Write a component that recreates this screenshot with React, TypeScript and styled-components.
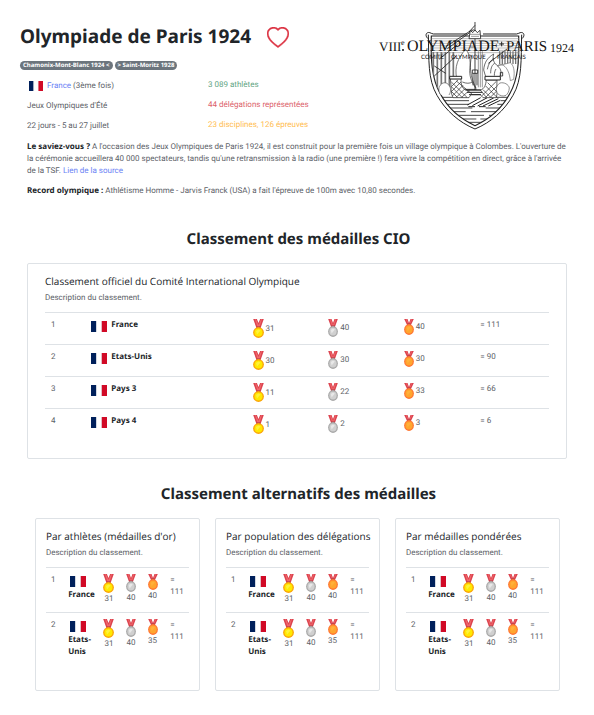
import React from "react";
import styled, { createGlobalStyle } from "styled-components";

const headingFont = `"Segoe UI", "Noto Sans", sans-serif`;

const GlobalStyle = createGlobalStyle`
  *, *::before, *::after { box-sizing: border-box; }
  body {
    margin: 0;
    background: #fff;
    color: #5c6167;
    font-family: "Segoe UI", Roboto, "Noto Sans", sans-serif;
    font-size: 8px;
    line-height: 12px;
    text-rendering: geometricPrecision;
  }
  h1, h2, h3, p { margin: 0; }
`;

const Page = styled.main`
  padding: 20px 17px 25px 20px;
`;

const Header = styled.header`
  display: grid;
  grid-template-columns: 1fr 200px;
`;

const TitleRow = styled.div`
  display: flex;
  align-items: center;
  gap: 16px;
  height: 32px;
`;

const Title = styled.h1`
  color: #212529;
  font-family: ${headingFont};
  font-size: 19px;
  line-height: 24px;
  font-weight: 700;
  white-space: nowrap;
`;

const HeartButton = styled.button`
  display: flex;
  padding: 4px 0 0;
  border: 0;
  background: none;
  color: #dc3545;
  cursor: pointer;
`;

const Badges = styled.nav`
  display: flex;
  gap: 2px;
  margin-top: 9px;
`;

const Badge = styled.a`
  padding: 0 3px;
  border-radius: 5px;
  background: #6c757d;
  color: #fff;
  font-family: ${headingFont};
  font-size: 6px;
  line-height: 9px;
  font-weight: 700;
  text-decoration: none;
  white-space: nowrap;
`;

const Facts = styled.div`
  display: grid;
  grid-template-columns: 181px 1fr;
  margin: 9px 0 0 7px;
`;

const FactList = styled.div`
  display: flex;
  flex-direction: column;
  gap: 8px;
`;

const Fact = styled.p<{ $tone?: string }>`
  display: flex;
  align-items: center;
  gap: 4px;
  color: ${(p) => p.$tone ?? "inherit"};
`;

const HostFact = styled(Fact)`
  min-height: 13px;
  padding-left: 2px;
`;

const Link = styled.a`
  color: #6b83f5;
  text-decoration: none;
`;

const Story = styled.div`
  display: flex;
  flex-direction: column;
  gap: 8px;
  margin: 9px 0 32px 7px;
`;

const StoryText = styled.p`
  margin-right: 10px;
`;

const Strong = styled.strong`
  color: #212529;
  font-family: ${headingFont};
  font-weight: 700;
  line-height: 12px;
`;

const SectionTitle = styled.h2`
  margin-bottom: 14px;
  color: #212529;
  font-family: ${headingFont};
  font-size: 15px;
  line-height: 20px;
  font-weight: 700;
  text-align: center;
`;

const Card = styled.section<{ $wide?: boolean }>`
  min-width: 0;
  padding: ${(p) => (p.$wide ? "10px 17px 17px" : "10px 10px 32px")};
  margin: ${(p) => (p.$wide ? "0 10px 25px 7px" : "0")};
  border: 1px solid #dee2e6;
  border-radius: 2px;
`;

const CardTitle = styled.h3`
  color: #212529;
  font-family: "Segoe UI", "Open Sans", sans-serif;
  font-size: 10px;
  line-height: 14px;
  font-weight: 400;
  white-space: nowrap;
`;

const CardText = styled.p`
  margin: 4px 0 8px;
`;

const Cards = styled.div`
  display: grid;
  grid-template-columns: repeat(3, 1fr);
  gap: 15px;
  margin: 0 17px 0 15px;
`;

const Table = styled.table`
  width: 100%;
  border-collapse: collapse;
  table-layout: fixed;
`;

const Row = styled.tr<{ $compact?: boolean }>`
  height: ${(p) => (p.$compact ? 45 : 32)}px;
  border-top: 1px solid #dee2e6;
`;

const Cell = styled.td<{ $compact?: boolean }>`
  padding: ${(p) => (p.$compact ? "6px 0 0 5px" : "6px 0 6px 6px")};
  vertical-align: top;
`;

const CompactMedalCell = styled(Cell)`
  padding: 6px 0 0;
`;

const TotalCell = styled(Cell)`
  padding-left: 7px;
`;

const Country = styled.div<{ $compact?: boolean }>`
  display: flex;
  flex-direction: ${(p) => (p.$compact ? "column" : "row")};
  gap: ${(p) => (p.$compact ? 2 : 4)}px;
  padding-top: ${(p) => (p.$compact ? 2 : 0)}px;

  svg {
    flex: none;
    margin: ${(p) => (p.$compact ? "0 0 0 2px" : "2px 0 0")};
  }
`;

const MedalCount = styled.div<{ $compact?: boolean }>`
  display: flex;
  flex-direction: ${(p) => (p.$compact ? "column" : "row")};
  align-items: center;
  gap: ${(p) => (p.$compact ? 0 : 2)}px;

  svg { flex: none; }
`;

const Flag = ({ width = 16 }: { width?: number }) => (
  <svg width={width} height={width === 16 ? 11 : 10} viewBox="0 0 16 11" preserveAspectRatio="none" aria-hidden="true">
    <path fill="#fff" d="M0 0h16v11H0z" />
    <path fill="#00205b" d="M0 0h5.2v11H0z" />
    <path fill="#d8dce3" d="M5.2 0h.6v11h-.6zM10.2 0h.6v11h-.6z" />
    <path fill="#d10a26" d="M10.8 0H16v11h-5.2z" />
  </svg>
);

type MedalKind = "gold" | "silver" | "bronze";

const medals: Record<MedalKind, { h: number; w: number; rim: string; face: string; shine: string; label: string }> = {
  gold: { h: 19, w: 11, rim: "#fba50a", face: "#ffe900", shine: "#fff23c", label: "Or" },
  silver: { h: 18, w: 10, rim: "#a9a9a9", face: "#d0d0d0", shine: "#e8e8e8", label: "Argent" },
  bronze: { h: 16, w: 10, rim: "#ff7733", face: "#ffa52e", shine: "#ffb13c", label: "Bronze" },
};

const Medal = ({ kind }: { kind: MedalKind }) => {
  const m = medals[kind];
  const cy = m.h - 5.5;
  return (
    <svg width={m.w} height={m.h} viewBox={`0 0 11 ${m.h}`} preserveAspectRatio="none" role="img" aria-label={m.label}>
      <path fill="#dc4450" d={`M.2 0h3.7l1.6 4L7.1 0h3.7L7.4 ${cy - 4}H3.6z`} />
      <path fill="#f0696c" d={`M2 0h.8l2.7 6L8.2 0H9L6.4 ${cy - 5}H4.6z`} />
      <path fill="#a53a43" d={`M3.6 ${cy - 6}h3.8v1.2H3.6z`} />
      <circle cx="5.5" cy={cy} r="5.4" fill={m.rim} />
      <circle cx="5.5" cy={cy} r="4" fill={m.face} />
      <path fill={m.shine} d={`M3 ${cy - 1.5}l2.5-1.5 2 1-3.5 4z`} />
    </svg>
  );
};

const Heart = () => (
  <svg width="22" height="22" viewBox="0 0 16 16" fill="currentColor" stroke="currentColor" strokeWidth=".3" aria-hidden="true">
    <path d="m8 2.748-.717-.737C5.6.281 2.514.878 1.4 3.053c-.523 1.023-.641 2.5.314 4.385.92 1.815 2.834 3.989 6.286 6.357 3.452-2.368 5.365-4.542 6.286-6.357.955-1.886.838-3.362.314-4.385C13.486.878 10.4.28 8.717 2.01zM8 15C-7.333 4.868 3.279-3.04 7.824 1.143q.09.083.176.171a3 3 0 0 1 .176-.17C12.72-3.042 23.333 4.867 8 15" />
  </svg>
);

const Crest = styled.svg`
  display: block;
  width: 100%;
  height: auto;
  align-self: start;
  overflow: visible;
`;

const Lettering = styled.text<{ $size: number }>`
  fill: #141414;
  font-family: "Liberation Serif", serif;
  font-size: ${(p) => p.$size}px;
`;

const Caption = styled.text`
  fill: #141414;
  font-family: Lato, sans-serif;
  font-size: 6px;
`;

const range = (from: number, to: number, step: number) =>
  Array.from({ length: Math.floor((to - from) / step) + 1 }, (_, i) => from + i * step);

const verticals = (x1: number, x2: number, y1: number, y2: number, step: number) =>
  range(x1, x2, step).map((x) => `M${x} ${y1}V${y2}`).join("");

const horizontals = (y1: number, y2: number, x1: number, x2: number, step: number) =>
  range(y1, y2, step).map((y) => `M${x1} ${y}H${x2}`).join("");

const inner = "M187 78H449C451 150 448 205 423 250C398 297 360 328 318 347C276 328 238 297 213 250C188 205 185 150 187 78Z";
const outer = "M178 74C180 150 176 208 204 256C230 302 270 337 318 357C366 337 406 302 432 256C460 208 456 150 458 74";

const ParisCrest = () => (
  <Crest viewBox="0 -1 200 110" role="img" aria-label="VIIIe Olympiade Paris 1924, Comité Olympique Français">
    <g transform="translate(-8 -11) scale(.33333)" fill="none" stroke="#222" strokeWidth="2">
      <clipPath id="shield"><path d={inner} /></clipPath>
      <path d={outer} fill="#fff" strokeWidth="3" />
      <path d={inner} strokeWidth="3.5" />
      <path d="M180 88c-16-10-8-27 7-18l6 2H295M456 88c16-10 8-27-7-18l-6 2H342" strokeWidth="3" />
      <g clipPath="url(#shield)">
        <path d={horizontals(86, 128, 188, 450, 7)} stroke="#999" strokeWidth="2" />
        <path d={verticals(193, 262, 126, 236, 12)} stroke="#777" strokeWidth="5" />
        <path d={verticals(392, 448, 124, 162, 8)} stroke="#777" strokeWidth="4" />
        <path d={verticals(328, 340, 124, 232, 6)} stroke="#666" />
        <path d="M192 262H300M350 262H446M198 272H300M395 272H440M205 283H300M385 283H430M214 294H310M350 294H420M225 305H290M306 305H414M236 316H345M360 316H400M254 327H322M334 327H382M280 337H356" strokeWidth="2.5" />
        <path d="M295 285l40-22M310 287l45-24M326 288l48-24M342 288l46-22M358 288l36-17M298 290h20M330 290h20" strokeWidth="3" />
      </g>
      <path d="M263 205C256 170 266 145 290 118C306 136 304 160 302 182C302 205 310 218 322 238H282C272 230 266 220 263 205Z" fill="#fff" stroke="#333" />
      <path d="M308 136c-7 30-5 65 13 98M280 216c12 5 22 5 30 0" />
      <path d="M344 180c2-22 10-36 30-48-5 18 2 28 12 36 12 10 12 22 6 32h-42z" fill="#fff" />
      <path d="M355 178c3-16 10-27 20-34M365 190c0-18 5-26 12-30M376 197c0-9 2-16 5-20" />
      <path d="M384 168C398 156 420 170 424 212L434 208C438 182 434 166 424 158z" fill="#fff" stroke="#666" />
      <path d="M244 206C248 230 244 250 252 263H300L306 254H334L342 263H382C387 247 382 230 384 210H352C350 226 346 237 334 240H290C278 234 276 222 276 206Z" fill="#fff" />
      <path d="M247 216l47 46M247 230l33 33M247 244l18 18M262 213l48 40M278 262l24-22M262 262l26-26M250 258l32-32M248 244l28-28M247 230l20-20M338 258l44-44M350 262l33-33M364 262l20-20M350 228l34 34M342 239l24 24M356 218l28 28M334 240l18 22" strokeWidth="2" />
      <path d="M290 240h46M294 247h46M300 254h36" strokeWidth="3" />
      <path d="M242 199h36v8h-36zM348 199h46v11h-46z" fill="#fff" strokeWidth="3" />
      <path d="M394 187h7v11h-7zM310 180h16v10h-16zM312 190v36M324 190v36" strokeWidth="2.5" />
      <path d="M215 254c-8-11-7-25 2-31 4-7 18-6 22 2 8 9 7 21 1 30M386 251c-7-11-4-26 7-32 12-3 26 4 28 15-1 11-5 18-10 22-9 4-17 2-25-5Z" fill="#fff" stroke="#555" />
      <path d="M318 36V240M230 110L310 59M235 116L316 58M196 168L230 190M196 198L262 137M358 160L414 117M265 104L210 148M300 66L318 46" strokeWidth="2.5" />
      <path d="M300 86l4-25 7 7 7-8 7 8 8-7 2 25z" fill="#fff" strokeWidth="2.5" />
      <path d="M303 73h30M306 79h24" stroke="#666" />
      <path d="M398 95v14M391 102h14" strokeWidth="3" />
    </g>
    <Lettering $size={13} x="2" y="30">VIII</Lettering>
    <Lettering $size={8} x="24" y="24">e</Lettering>
    <circle cx="26" cy="29" r="1" fill="#141414" />
    <Lettering $size={16} x="30" y="30">OLYMPIADE</Lettering>
    <Lettering $size={15} x="129" y="30">PARIS</Lettering>
    <Lettering $size={12} x="173" y="31">1924</Lettering>
    <Caption x="44" y="38">COMITÉ</Caption>
    <Caption x="74" y="38">OLYMPIQUE</Caption>
    <Caption x="120" y="38">FRANÇAIS</Caption>
  </Crest>
);

type Entry = { rank: number; country: string; gold: number; silver: number; bronze: number; total: number };

const official: Entry[] = [
  { rank: 1, country: "France", gold: 31, silver: 40, bronze: 40, total: 111 },
  { rank: 2, country: "Etats-Unis", gold: 30, silver: 30, bronze: 30, total: 90 },
  { rank: 3, country: "Pays 3", gold: 11, silver: 22, bronze: 33, total: 66 },
  { rank: 4, country: "Pays 4", gold: 1, silver: 2, bronze: 3, total: 6 },
];

const alternative: Entry[] = [
  { rank: 1, country: "France", gold: 31, silver: 40, bronze: 40, total: 111 },
  { rank: 2, country: "Etats-Unis", gold: 31, silver: 40, bronze: 35, total: 111 },
];

const Col = styled.col<{ $share: number }>`
  width: ${(p) => p.$share}%;
`;

const wideColumns = [8, 32, 15, 15, 15, 15];
const compactColumns = [12, 24, 16, 15, 15, 18];

const Ranking = ({ title, rows, compact }: { title: string; rows: Entry[]; compact?: boolean }) => {
  const MedalCell = compact ? CompactMedalCell : Cell;
  return (
    <Card $wide={!compact}>
      <CardTitle>{title}</CardTitle>
      <CardText>Description du classement.</CardText>
      <Table aria-label={title}>
        <colgroup>
          {(compact ? compactColumns : wideColumns).map((share, i) => (
            <Col key={i} $share={share} />
          ))}
        </colgroup>
        <tbody>
          {rows.map((r) => (
            <Row key={r.rank} $compact={compact}>
              <Cell $compact={compact}>{r.rank}</Cell>
              <Cell $compact={compact}>
                <Country $compact={compact}>
                  <Flag />
                  <Strong>{r.country}</Strong>
                </Country>
              </Cell>
              {(["gold", "silver", "bronze"] as MedalKind[]).map((kind) => (
                <MedalCell key={kind}>
                  <MedalCount $compact={compact}>
                    <Medal kind={kind} />
                    {r[kind]}
                  </MedalCount>
                </MedalCell>
              ))}
              <TotalCell $compact={compact}>= {r.total}</TotalCell>
            </Row>
          ))}
        </tbody>
      </Table>
    </Card>
  );
};

export default function App() {
  return (
    <>
      <GlobalStyle />
      <Page>
        <Header>
          <div>
            <TitleRow>
              <Title>Olympiade de Paris 1924</Title>
              <HeartButton type="button" aria-label="Ajouter aux favoris">
                <Heart />
              </HeartButton>
            </TitleRow>
            <Badges>
              <Badge href="#chamonix">Chamonix-Mont-Blanc 1924 &lt;</Badge>
              <Badge href="#saint-moritz">&gt; Saint-Moritz 1928</Badge>
            </Badges>
            <Facts>
              <FactList>
                <HostFact>
                  <Flag width={14} />
                  <span>
                    <Link href="#france">France</Link> (3ème fois)
                  </span>
                </HostFact>
                <Fact>Jeux Olympiques d'Été</Fact>
                <Fact>22 jours - 5 au 27 juillet</Fact>
              </FactList>
              <FactList>
                <Fact $tone="#5fa583">3 089 athlètes</Fact>
                <Fact $tone="#dc5f6b">44 délégations représentées</Fact>
                <Fact $tone="#ffbd4f">23 disciplines, 126 épreuves</Fact>
              </FactList>
            </Facts>
          </div>
          <ParisCrest />
        </Header>
        <Story>
          <StoryText>
            <Strong>Le saviez-vous ?</Strong> A l'occasion des Jeux Olympiques de Paris 1924, il est construit pour la
            première fois un village olympique à Colombes. L'ouverture de la cérémonie accueillera 40 000 spectateurs,
            tandis qu'une retransmission à la radio (une première !) fera vivre la compétition en direct, grâce à
            l'arrivée de la TSF. <Link href="#source">Lien de la source</Link>
          </StoryText>
          <StoryText>
            <Strong>Record olympique :</Strong> Athlétisme Homme - Jarvis Franck (USA) a fait l'épreuve de 100m avec
            10,80 secondes.
          </StoryText>
        </Story>

        <SectionTitle>Classement des médailles CIO</SectionTitle>
        <Ranking title="Classement officiel du Comité International Olympique" rows={official} />

        <SectionTitle>Classement alternatifs des médailles</SectionTitle>
        <Cards>
          <Ranking compact title="Par athlètes (médailles d'or)" rows={alternative} />
          <Ranking compact title="Par population des délégations" rows={alternative} />
          <Ranking compact title="Par médailles pondérées" rows={alternative} />
        </Cards>
      </Page>
    </>
  );
}
